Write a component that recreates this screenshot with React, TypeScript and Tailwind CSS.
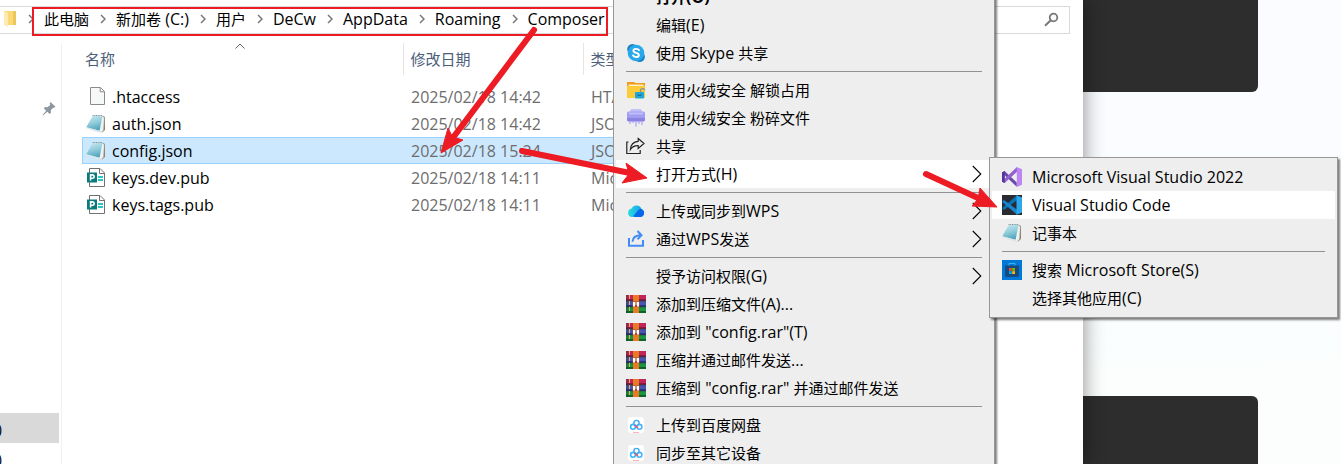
import React from "react";

type IconName = "skype" | "folder" | "shred" | "share" | "cloud" | "send" | "rar" | "baidu" | "vs" | "code" | "notepad" | "store";

type Entry =
  | { kind: "item"; label: string; icon?: IconName; arrow?: boolean; active?: boolean; bold?: boolean }
  | { kind: "separator" };

const mainMenu: Entry[] = [
  { kind: "item", label: "打开(O)", bold: true },
  { kind: "item", label: "编辑(E)" },
  { kind: "item", label: "使用 Skype 共享", icon: "skype" },
  { kind: "separator" },
  { kind: "item", label: "使用火绒安全 解锁占用", icon: "folder" },
  { kind: "item", label: "使用火绒安全 粉碎文件", icon: "shred" },
  { kind: "item", label: "共享", icon: "share" },
  { kind: "item", label: "打开方式(H)", arrow: true, active: true },
  { kind: "separator" },
  { kind: "item", label: "上传或同步到WPS", icon: "cloud", arrow: true },
  { kind: "item", label: "通过WPS发送", icon: "send", arrow: true },
  { kind: "separator" },
  { kind: "item", label: "授予访问权限(G)", arrow: true },
  { kind: "item", label: "添加到压缩文件(A)...", icon: "rar" },
  { kind: "item", label: '添加到 "config.rar"(T)', icon: "rar" },
  { kind: "item", label: "压缩并通过邮件发送...", icon: "rar" },
  { kind: "item", label: '压缩到 "config.rar" 并通过邮件发送', icon: "rar" },
  { kind: "separator" },
  { kind: "item", label: "上传到百度网盘", icon: "baidu" },
  { kind: "item", label: "同步至其它设备", icon: "baidu" },
];

const openWithMenu: Entry[] = [
  { kind: "item", label: "Microsoft Visual Studio 2022", icon: "vs" },
  { kind: "item", label: "Visual Studio Code", icon: "code", active: true },
  { kind: "item", label: "记事本", icon: "notepad" },
  { kind: "separator" },
  { kind: "item", label: "搜索 Microsoft Store(S)", icon: "store" },
  { kind: "item", label: "选择其他应用(C)" },
];

const crumbs = ["此电脑", "新加卷 (C:)", "用户", "DeCw", "AppData", "Roaming", "Composer"];

const files = [
  { name: ".htaccess", date: "2025/02/18 14:42", type: "HTACCESS", icon: "blank" },
  { name: "auth.json", date: "2025/02/18 14:42", type: "JSON", icon: "notepad" },
  { name: "config.json", date: "2025/02/18 15:24", type: "JSON", icon: "notepad" },
  { name: "keys.dev.pub", date: "2025/02/18 14:11", type: "Micr", icon: "publisher" },
  { name: "keys.tags.pub", date: "2025/02/18 14:11", type: "Micr", icon: "publisher" },
];

// Latin runs are set one size up so that they sit evenly beside the Chinese glyphs.
function MixedText({ text }: { text: string }) {
  return (
    <>
      {text.split(/([^\u4e00-\u9fff]+)/).map((run, index) =>
        index % 2 && run.trim() ? (
          <span key={index} className="text-base leading-5">{run}</span>
        ) : (
          run
        ),
      )}
    </>
  );
}

function Notepad() {
  return (
    <svg viewBox="0 0 20 20" className="size-5 shrink-0" aria-hidden="true">
      <defs>
        <linearGradient id="pad" x1="0.3" y1="0" x2="0.6" y2="1">
          <stop offset="0" stopColor="#c5e6ee" />
          <stop offset="0.5" stopColor="#8fcbdb" />
          <stop offset="1" stopColor="#4ba0b9" />
        </linearGradient>
      </defs>
      <path d="M16.8 1.8 19 3v13l-3 2.6z" fill="#8f8468" />
      <path d="m16 2 2.2 1.5-.8 12.8-2.4 2.2-4-1.5z" fill="#eef2f3" stroke="#b4b8b8" strokeWidth=".4" />
      <path d="M6.8 1.7h9.7l-2.9 15L.2 13.3z" fill="url(#pad)" />
      <path d="m.2 13.3 13.4 3.4 1.2 1.8-3.6-.6L1 14.6z" fill="#dbe6e8" />
      <path d="M6.6 1.5h9.8" stroke="#7c8f8c" strokeWidth="1.2" strokeDasharray="1 .7" />
    </svg>
  );
}

function FileIcon({ name }: { name: string }) {
  if (name === "notepad") return <Notepad />;
  if (name === "blank")
    return (
      <svg viewBox="0 0 20 20" className="size-5 shrink-0" aria-hidden="true">
        <path d="M4.5.5h10l4 4v13h-14z" fill="#f7f8f8" stroke="#8a8a8a" />
        <path d="M14.2.8v4h4" fill="#fff" stroke="#8a8a8a" />
      </svg>
    );
  return (
    <svg viewBox="0 0 20 20" className="size-5 shrink-0" aria-hidden="true">
      <path d="M3.5.5H14l4.5 4.5v13.5h-15z" fill="#fff" stroke="#717171" />
      <path d="M13.5.8v4.7h4.8" fill="none" stroke="#717171" />
      <path d="M12 9h5M12 12h5" stroke="#2fc4c4" strokeWidth="2" />
      <path d="M1 4.5h10v10H1z" fill="#0a7a7b" />
      <path d="M4.6 12.5V6.9h1.8a1.7 1.7 0 0 1 0 3.4H4.6" fill="none" stroke="#fff" strokeWidth="1.6" />
    </svg>
  );
}

function MenuIcon({ name }: { name: IconName }) {
  switch (name) {
    case "notepad":
      return <Notepad />;
    case "skype":
      return (
        <svg viewBox="0 0 20 20" className="size-5" aria-hidden="true">
          <circle cx="6.5" cy="6.3" r="5.3" fill="#1b7fc0" />
          <circle cx="13.6" cy="13.7" r="5.3" fill="#1683cc" />
          <circle cx="10" cy="10" r="8.3" fill="#28a8ea" />
          <path d="M13 7.2C12.3 5.6 7.5 5.2 7.4 7.7c-.1 2.7 5.7 1.6 5.5 4.4-.1 2.5-5.2 2.6-5.9.2" fill="none" stroke="#fff" strokeWidth="1.9" strokeLinecap="round" />
        </svg>
      );
    case "folder":
      return (
        <svg viewBox="0 0 20 20" className="size-5" aria-hidden="true">
          <path d="M1 2h7l1.5 1H19v5H1z" fill="#f2991b" />
          <path d="M2.5 4.5h15V7h-15z" fill="#fff1c4" />
          <path d="M1 6h18v12H1z" fill="#fccb3a" />
          <path d="M14.5 12.5v-1.7a2.2 2.2 0 0 1 4.3-.6" fill="none" stroke="#8b929a" strokeWidth="1.3" />
          <rect x="9" y="12" width="9" height="6.5" rx="1" fill="#20a7d6" />
          <path d="M12 14.3v1.2h3v-1.2" fill="none" stroke="#116c9d" />
        </svg>
      );
    case "shred":
      return (
        <svg viewBox="0 0 20 20" className="size-5" aria-hidden="true">
          <path d="M5 1h10l1.5 4h-13z" fill="#c1c2f8" />
          <rect x="1" y="3.5" width="18" height="10" rx="2" fill="#a29cf2" />
          <path d="M3 4.5h14v2H3z" fill="#c0bffb" />
          <path d="M1 10h18v1.5a2 2 0 0 1-2 2H3a2 2 0 0 1-2-2z" fill="#8b83e2" />
          <path d="M4 13v3M7 13v2M10 13v5.5M13 13v3M16 13v4" stroke="#b5aef5" strokeWidth="1.4" />
        </svg>
      );
    case "share":
      return (
        <svg viewBox="0 0 20 20" className="size-5" fill="none" stroke="#222" strokeWidth="1.2" aria-hidden="true">
          <path d="M2.5 6H.8v11.5h13.4V14" />
          <path d="M12.2 2.5 18 7.5l-5.8 5V9.7c-3.7-.2-5.8.8-7.8 3.8.3-4.8 3-7.8 7.8-8.2z" />
        </svg>
      );
    case "cloud":
      return (
        <svg viewBox="0 0 20 20" className="size-5" aria-hidden="true">
          <defs>
            <linearGradient id="cloud" x1="0" x2="1">
              <stop stopColor="#2adbd9" />
              <stop offset="1" stopColor="#129bf3" />
            </linearGradient>
          </defs>
          <path d="M6 16a4.3 4.3 0 0 1-.4-8.5A5.4 5.4 0 0 1 15.5 8 4.2 4.2 0 0 1 14 16z" fill="url(#cloud)" />
          <path d="m8.2 14 4.2-5c2.2-2.3 6 .2 5.7 3.3-.2 2.4-1.6 3.7-4 3.7H9.3c-1.7 0-2-.8-1.1-2z" fill="#0866e8" />
        </svg>
      );
    case "send":
      return (
        <svg viewBox="0 0 20 20" className="size-5" fill="none" stroke="#438cf6" strokeWidth="2" aria-hidden="true">
          <path d="M3 9v7.8h14V11" />
          <path d="M6.5 12.8c.3-4.2 3-6.5 8.5-6.5M11.5 2l4 4.3-4 4" />
        </svg>
      );
    case "rar":
      return (
        <svg viewBox="0 0 20 20" className="size-5" aria-hidden="true">
          <path d="M0 1h20v6H0z" fill="#c2245c" />
          <path d="M0 7h20v6H0z" fill="#4a55ae" />
          <path d="M0 13h20v6H0z" fill="#1c9440" />
          <path d="M0 5h20v1.5H0z" fill="#8d1740" />
          <path d="M0 11h20v1.5H0z" fill="#2b3480" />
          <path d="M0 17h20v2H0z" fill="#12602a" />
          <path d="M0 6.8h20M0 12.8h20" stroke="#1b2930" strokeWidth=".7" />
          <path d="M3.5 1v18" stroke="#d6b64d" strokeWidth="1" strokeDasharray="4 2" />
          <path d="M1 1v18" stroke="#26303a" strokeWidth=".6" />
          <path d="M7 1h6v18H7z" fill="#e87a22" />
          <path d="M6.5 7.5h7v5.5h-7z" fill="#a8492f" />
          <path d="M7 8v4.5h2V8zM11 8v4.5h2V8z" fill="#fff" />
          <path d="M10 8v3" stroke="#f3dccb" strokeWidth="1" />
        </svg>
      );
    case "baidu":
      return (
        <svg viewBox="0 0 20 20" className="size-5" fill="none" aria-hidden="true">
          <rect x="2" y="2" width="16" height="16" rx="3" fill="#fff" />
          <circle cx="10.5" cy="8" r="2.6" stroke="#39aaf4" strokeWidth="1.4" />
          <circle cx="7" cy="11.8" r="2.4" stroke="#35b7f8" strokeWidth="1.6" />
          <circle cx="13.5" cy="11.8" r="2.4" stroke="#4bb4f8" strokeWidth="1.6" />
          <path d="m8.5 10 3.3 3" stroke="#ee5367" strokeWidth="1.5" />
          <path d="M7 17.5h6" stroke="#ffb1bd" />
        </svg>
      );
    case "vs":
      return (
        <svg viewBox="0 0 20 20" className="size-5" aria-hidden="true">
          <path d="M0 5.5 2.6 4l12.2 11.5v4.3L2.6 8.3v7.8L0 14.5z" fill="#6a4aa6" />
          <path d="M0 14.5 2.6 16 15 4.7V0L2.6 11.8V7z" fill="#9361cf" />
          <path d="m14.8 0 5.2 2.3v15.4l-5.2 2.3z" fill="#bd86f4" />
          <path d="M0 5.5 2.6 4v12L0 14.5z" fill="#51359a" />
        </svg>
      );
    case "code":
      return (
        <svg viewBox="0 0 20 20" className="size-5" aria-hidden="true">
          <path d="M0 0h20v20H0z" fill="#292b31" />
          <path d="m0 13.2 2 1.8L15 5.2V.2z" fill="#0872b5" />
          <path d="M0 6.8 2 5l13 9.8v5z" fill="#1687cf" />
          <path d="M14.5.2 20 2.4v15.2l-5.5 2.2z" fill="#2aa7ed" />
        </svg>
      );
    case "store":
      return (
        <svg viewBox="0 0 20 20" className="size-5" aria-hidden="true">
          <path d="M0 0h20v20H0z" fill="#0078d7" />
          <path d="M7 6V3.5h6V6" fill="none" stroke="#3ab5ed" />
          <path d="M3 5.5h14V15q0 2-2 2H5q-2 0-2-2z" fill="#174a7e" />
          <path d="M7 8h2.8v2.8H7z" fill="#f25022" />
          <path d="M10.2 8H13v2.8h-2.8z" fill="#7fba00" />
          <path d="M7 11.2h2.8V14H7z" fill="#00a4ef" />
          <path d="M10.2 11.2H13V14h-2.8z" fill="#ffb900" />
        </svg>
      );
  }
}

function MenuEntries({ entries }: { entries: Entry[] }) {
  return (
    <>
      {entries.map((entry, index) =>
        entry.kind === "separator" ? (
          <div key={index} role="separator" className="mx-2.5 h-[9px] py-1">
            <div className="h-px bg-[#919191]" />
          </div>
        ) : (
          <button
            key={index}
            type="button"
            role="menuitem"
            className={`flex h-7 w-full items-center gap-2.5 px-2.5 text-left whitespace-nowrap ${entry.active ? "bg-white" : ""} ${entry.bold ? "font-bold" : ""}`}
          >
            <span className="flex size-5 shrink-0 items-center">{entry.icon && <MenuIcon name={entry.icon} />}</span>
            <span className="flex-1"><MixedText text={entry.label} /></span>
            {entry.arrow && (
              <svg viewBox="0 0 10 18" className="h-[18px] w-2.5" fill="none" stroke="#000" strokeWidth="1.1" aria-hidden="true">
                <path d="m.8 1 8 8-8 8" />
              </svg>
            )}
          </button>
        ),
      )}
    </>
  );
}

function AddressBar() {
  return (
    <div className="flex gap-3 pt-1.5 pr-[13px]">
      <nav aria-label="路径" className="flex h-7 flex-1 items-center border-y border-[#d9d9d9] pb-0.5 pl-1">
        <svg viewBox="0 0 13 18" className="h-[18px] w-[13px]" aria-hidden="true">
          <path d="M0 1h10v14H0z" fill="#f9d978" />
          <path d="M9 1h3v14H9z" fill="#efc65c" />
          <path d="M0 1 4 3v14l-4-2z" fill="#ffeab0" />
        </svg>
        <ol className="flex items-center">
          {crumbs.map((crumb) => (
            <li key={crumb} className="flex items-center">
              <svg viewBox="0 0 6 10" className="mr-2.5 ml-[11px] h-2.5 w-1.5" fill="none" stroke="#777" strokeWidth="1.5" aria-hidden="true">
                <path d="m1 1 4 4-4 4" />
              </svg>
              <a href="#" className="whitespace-nowrap"><MixedText text={crumb} /></a>
            </li>
          ))}
        </ol>
      </nav>
      <button type="button" aria-label="搜索" className="flex h-7 w-[200px] items-center justify-end border border-[#d9d9d9] pr-2.5">
        <svg viewBox="0 0 16 16" className="size-4" fill="none" stroke="#777" aria-hidden="true">
          <circle cx="10.5" cy="5.5" r="3.8" strokeWidth="1.8" />
          <path d="m7.8 8.2-5.8 5.6" strokeWidth="2" />
        </svg>
      </button>
    </div>
  );
}

function FileTable() {
  return (
    <table className="w-full table-fixed border-collapse text-left">
      <colgroup>
        <col className="w-[321px]" />
        <col className="w-[180px]" />
        <col />
      </colgroup>
      <thead>
        <tr className="h-8 text-[#4c607a]">
          <th className="relative border-r border-[#e5e5e5] p-0 pl-[3px] font-normal">
            名称
            <svg viewBox="0 0 10 6" className="absolute top-0 left-[153px] h-1.5 w-2.5" fill="none" stroke="#666" aria-hidden="true">
              <path d="m.5 5.5 4.5-4.5 4.5 4.5" />
            </svg>
          </th>
          <th className="border-r border-[#e5e5e5] p-0 pl-[7px] font-normal">修改日期</th>
          <th className="p-0 pl-[7px] font-normal">类型</th>
        </tr>
        <tr className="h-2" aria-hidden="true" />
      </thead>
      <tbody className="text-base leading-5">
        {files.map((file) => (
          <tr key={file.name} className={`h-[27px] ${file.name === "config.json" ? "bg-[#cce8ff] outline outline-1 -outline-offset-1 outline-[#99d1ff]" : ""}`}>
            <td className="p-0 pl-1">
              <span className="flex items-center gap-1.5">
                <FileIcon name={file.icon} />
                {file.name}
              </span>
            </td>
            <td className="p-0 pl-2 text-[#6d6d6d]">{file.date}</td>
            <td className="p-0 pl-2 whitespace-nowrap text-[#6d6d6d]">{file.type}</td>
          </tr>
        ))}
      </tbody>
    </table>
  );
}

function Sidebar() {
  return (
    <aside className="flex w-[62px] shrink-0 flex-col border-r border-[#f0f0f0]">
      <svg viewBox="0 0 14 14" className="mt-[59px] ml-[42px] size-3.5" fill="#8c98a1" aria-hidden="true">
        <path d="M8.5 0 13.5 4.7 11.8 6l-.7-.3-2.3 2.6.2 2.5-1.3 1.3L5.3 9.7 1 13.5l-.5-.4 3.7-4.4L1.8 6.3 3 5l2.5.2L8.2 3l-.5-1.4z" />
      </svg>
      <div className="mt-[297px] mr-[2px] flex h-[30px] items-center bg-[#d9d9d9]">
        <span className="flex w-0.5 justify-end overflow-hidden">)</span>
      </div>
      <div className="flex h-[30px] items-center">
        <span className="flex w-0.5 justify-end overflow-hidden">)</span>
      </div>
    </aside>
  );
}

export default function App() {
  return (
    <div className="relative flex h-screen overflow-hidden bg-linear-to-b from-[#fafcff] from-60% to-[#fbfefd] to-80% font-['Open_Sans','Noto_Sans_CJK_SC',sans-serif] text-[15px] leading-5 text-black">
      <main className="z-10 flex min-w-0 flex-1 flex-col bg-white shadow-[0_0_20px_rgba(0,0,0,0.45)]">
        <AddressBar />
        <div className="flex flex-1 pt-[9px]">
          <Sidebar />
          <section className="flex-1 pr-[110px] pl-5">
            <FileTable />
          </section>
        </div>
      </main>
      <div className="flex w-[258px] shrink-0 flex-col justify-between pr-[83px]">
        <div className="h-[92px] rounded-br-md bg-[#2d2d2d]" />
        <div className="h-[68px] rounded-tr-md bg-[#2d2d2d]" />
      </div>

      <div role="menu" aria-label="文件" className="absolute -top-5 left-[613px] z-20 w-[382px] border border-[#979797] bg-[#eeeeee] p-0.5 shadow-[2px_2px_2px_rgba(0,0,0,0.5)]">
        <MenuEntries entries={mainMenu} />
      </div>
      <div role="menu" aria-label="打开方式" className="absolute top-[157px] left-[989px] z-30 w-[349px] border border-[#979797] bg-[#eeeeee] px-0.5 py-[5px] shadow-[2px_2px_2px_rgba(0,0,0,0.5)]">
        <MenuEntries entries={openWithMenu} />
      </div>

      <div className="pointer-events-none absolute top-[7px] left-8 z-40 h-[29px] w-[576px] border-2 border-[#ed1c24]" />
      <svg viewBox="0 0 1341 464" className="pointer-events-none absolute top-0 left-0 z-40 h-[464px] w-[1341px]" fill="#ed1c24" stroke="#ed1c24" aria-hidden="true">
        <path d="M534 30 452 139M522 151l108 22M926 174l52 24" strokeWidth="6" strokeLinecap="round" />
        <path d="m441 153 7-25 4 8 4 2 7 2zM647 178l-25 5 7-9-3-11zM997 207l-25-1 6-7 2-11z" strokeWidth="1" />
      </svg>
    </div>
  );
}
